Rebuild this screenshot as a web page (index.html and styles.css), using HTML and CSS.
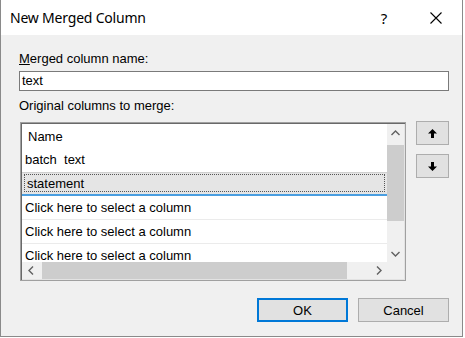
FILE: index.html
```html
<!DOCTYPE html>
<html lang="en">
<head>
  <meta charset="UTF-8" />
  <title>New Merged Column</title>
  <link rel="stylesheet" href="styles.css">
</head>
<body>

  <!-- Dialog window -->
  <div class="window">

    <!-- Title bar -->
    <div class="titlebar">
      <span class="title">New Merged Column</span>
      <span class="help">?</span>
      <span class="close">
        <svg width="12" height="12" viewBox="0 0 12 12">
          <path d="M0.5 0.5 L11.5 11.5 M11.5 0.5 L0.5 11.5" stroke="#000" stroke-width="1.1" fill="none"></path>
        </svg>
      </span>
    </div>

    <!-- Body -->
    <div class="content">
      <div class="field-label"><u>M</u>erged column name:</div>
      <div class="textbox">text</div>

      <div class="field-label second">Original columns to merge:</div>
      <div class="merge-row">

        <!-- Column list -->
        <div class="listbox">
          <div class="list-items">
            <div class="row header">Name</div>
            <div class="row">batch&nbsp; text</div>
            <div class="row selected"><span class="focus">statement</span></div>
            <div class="row empty">Click here to select a column</div>
            <div class="row empty">Click here to select a column</div>
            <div class="row empty">Click here to select a column</div>
          </div>

          <div class="vscroll">
            <span class="sb-btn">
              <svg width="9" height="6" viewBox="0 0 9 6"><polyline points="0.5,5 4.5,1 8.5,5" fill="none" stroke="#606060" stroke-width="1.4"></polyline></svg>
            </span>
            <span class="vthumb"></span>
            <span class="sb-btn down">
              <svg width="9" height="6" viewBox="0 0 9 6"><polyline points="0.5,1 4.5,5 8.5,1" fill="none" stroke="#606060" stroke-width="1.4"></polyline></svg>
            </span>
          </div>

          <div class="hscroll">
            <span class="sb-btn">
              <svg width="6" height="9" viewBox="0 0 6 9"><polyline points="5,0.5 1,4.5 5,8.5" fill="none" stroke="#606060" stroke-width="1.4"></polyline></svg>
            </span>
            <span class="hthumb"></span>
            <span class="sb-btn right">
              <svg width="6" height="9" viewBox="0 0 6 9"><polyline points="1,0.5 5,4.5 1,8.5" fill="none" stroke="#606060" stroke-width="1.4"></polyline></svg>
            </span>
          </div>

          <div class="corner"></div>
        </div>

        <!-- Move up / down -->
        <div class="move-buttons">
          <span class="sq-btn">
            <svg width="9" height="9" viewBox="0 0 9 9"><polygon points="4.5,0 9,4.5 6,4.5 6,9 3,9 3,4.5 0,4.5" fill="#000"></polygon></svg>
          </span>
          <span class="sq-btn">
            <svg width="9" height="9" viewBox="0 0 9 9"><polygon points="3,0 6,0 6,4.5 9,4.5 4.5,9 0,4.5 3,4.5" fill="#000"></polygon></svg>
          </span>
        </div>
      </div>

      <!-- OK / Cancel -->
      <div class="actions">
        <button class="btn default">OK</button>
        <button class="btn">Cancel</button>
      </div>
    </div>
  </div>

</body>
</html>
```

FILE: styles.css
```css
/* Windows dialog colours */
:root {
  --color-face: #f0f0f0;
  --color-btn: #e1e1e1;
  --color-btn-border: #adadad;
  --color-thumb: #cdcdcd;
  --color-accent: #0078d7;
}

* {
  box-sizing: border-box;
}
body {
  margin: 0;
  background: #fff;
  font-family: "Liberation Sans", Arial, sans-serif;
  font-size: 13px;
  color: #000;
}

/* Window */
.window {
  width: 463px;
  height: 337px;
  border: 1px solid #8a8a8a;
  border-top: 0;
  background: var(--color-face);
  display: flex;
  flex-direction: column;
}

/* Title bar */
.titlebar {
  height: 35px;
  flex-shrink: 0;
  background: #fff;
  display: flex;
  align-items: center;
  padding-left: 9px;
  padding-right: 3px;
}
.title {
  flex: 1;
  font-family: "Noto Sans", sans-serif;
  font-size: 14px;
  letter-spacing: -0.2px;
}
.help {
  width: 46px;
  margin-right: 6px;
  text-align: center;
  font-family: "Noto Sans", sans-serif;
  font-size: 15px;
}
.close {
  width: 46px;
  display: flex;
  justify-content: center;
}

/* Body */
.content {
  flex: 1;
  display: flex;
  flex-direction: column;
  padding: 16px 13px 0 18px;
}
.field-label {
  line-height: 15px;
}
.field-label.second {
  margin-top: 7px;
}
.textbox {
  margin-top: 5px;
  height: 20px;
  border: 1px solid #7a7a7a;
  background: #fff;
  padding-left: 2px;
  line-height: 18px;
}

/* List + side buttons */
.merge-row {
  display: flex;
  align-items: flex-start;
  gap: 10px;
  margin-top: 9px;
}
.listbox {
  margin-left: 1px;
  width: 386px;
  height: 159px;
  border: 1px solid #a0a0a0;
  box-shadow: inset 1px 1px 0 #696969, inset -1px -1px 0 #e3e3e3;
  padding: 1px;
  background: #fff;
  display: grid;
  grid-template-columns: 1fr 17px;
  grid-template-rows: 1fr 17px;
}
.list-items {
  overflow: hidden;
  padding-top: 1px;
}
.row {
  height: 24px;
  line-height: 24px;
  padding-left: 3px;
  white-space: nowrap;
}
.row.header {
  height: 23px;
  line-height: 23px;
  padding-left: 6px;
}
.row.selected {
  padding: 0;
  line-height: normal;
  background: #e5e5e5;
  border-top: 1px solid #cfcfcf;
  border-bottom: 2px solid #4a9ee0;
}
.row.selected .focus {
  display: block;
  margin: 1px 2px 2px 2px;
  height: 18px;
  line-height: 17px;
  border: 1px dotted #555;
  padding-left: 2px;
}
.row.empty {
  border-bottom: 1px solid #ebebeb;
  line-height: 24px;
}

/* Scrollbars */
.vscroll,
.hscroll,
.corner {
  background: var(--color-face);
}
.vscroll {
  display: flex;
  flex-direction: column;
}
.hscroll {
  display: flex;
}
.sb-btn {
  width: 17px;
  height: 17px;
  flex-shrink: 0;
  display: flex;
  align-items: center;
  justify-content: center;
}
.sb-btn.down {
  margin-top: auto;
}
.sb-btn.right {
  margin-left: auto;
}
.vthumb {
  margin-top: 4px;
  height: 76px;
  background: var(--color-thumb);
}
.hthumb {
  margin-left: 3px;
  width: 305px;
  background: var(--color-thumb);
}

.move-buttons {
  display: flex;
  flex-direction: column;
  gap: 9px;
  margin-top: -1px;
}
.sq-btn {
  width: 33px;
  height: 24px;
  border: 1px solid var(--color-btn-border);
  background: var(--color-btn);
  display: flex;
  align-items: center;
  justify-content: center;
}

/* Dialog buttons */
.actions {
  display: flex;
  justify-content: flex-end;
  gap: 10px;
  margin-top: 17px;
}
.btn {
  width: 91px;
  height: 24px;
  padding: 0;
  border: 1px solid var(--color-btn-border);
  background: var(--color-btn);
  font-family: inherit;
  font-size: 13px;
  color: #000;
}
.btn.default {
  border: 2px solid var(--color-accent);
}
```
